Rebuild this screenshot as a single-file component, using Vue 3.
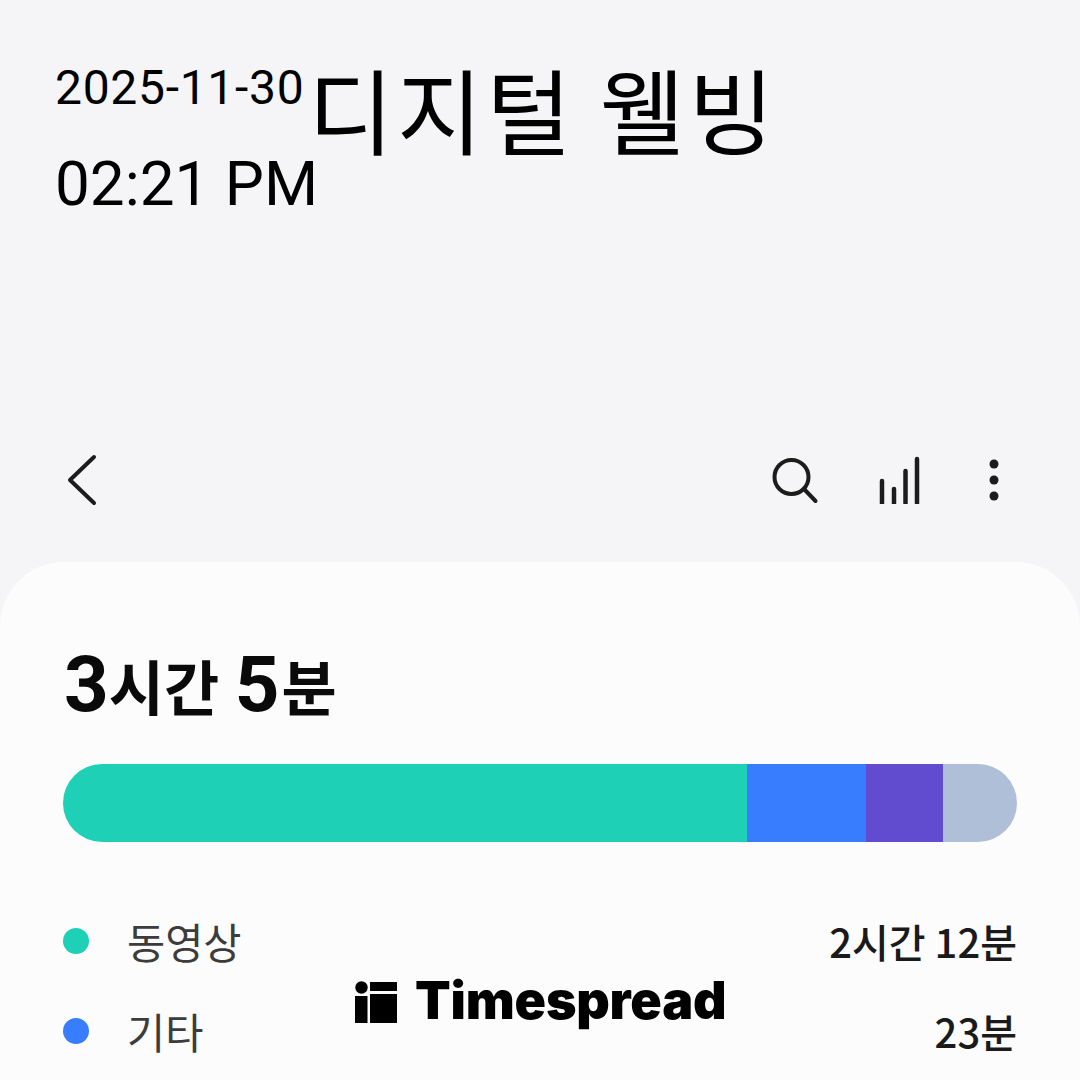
<template>
  <div class="page">
    <header class="head">
      <div class="stamp">
        <div class="date">2025-11-30</div>
        <div class="time">02:21 PM</div>
      </div>
      <h1 class="title">디지털 웰빙</h1>
    </header>

    <nav class="bar">
      <svg class="back" width="32" height="52" viewBox="0 0 32 52" fill="none">
        <path d="M28 3 L4 26 L28 49" stroke="#1c1c1c" stroke-width="4" stroke-linecap="round" stroke-linejoin="round" />
      </svg>
      <div class="tools">
        <svg width="48" height="48" viewBox="0 0 48 48" fill="none">
          <circle cx="20.500" cy="21" r="17" stroke="#1c1c1c" stroke-width="4" />
          <path d="M33 33 L44.500 45" stroke="#1c1c1c" stroke-width="4" stroke-linecap="round" />
        </svg>
        <svg width="44" height="48" viewBox="0 0 44 48" fill="none">
          <path d="M4 47 V25 M16 47 V33 M27.500 47 V15 M39 47 V3" stroke="#1c1c1c" stroke-width="4.500" stroke-linecap="round" />
        </svg>
        <svg width="26" height="42" viewBox="0 0 26 42">
          <circle cx="13" cy="5" r="4.500" fill="#1c1c1c" />
          <circle cx="13" cy="21" r="4.500" fill="#1c1c1c" />
          <circle cx="13" cy="37" r="4.500" fill="#1c1c1c" />
        </svg>
      </div>
    </nav>

    <section class="card">
      <div class="total">
        <b>3</b><span>시간</span>&nbsp;<b class="five">5</b><span class="min">분</span>
      </div>
      <div class="stack">
        <i v-for="s in segments" :key="s.color" :style="{ width: s.width + 'px', background: s.color }"></i>
      </div>
      <ul class="legend">
        <li v-for="row in rows" :key="row.name">
          <i class="dot" :style="{ background: row.color }"></i>
          <span class="name">{{ row.name }}</span>
          <span class="value">{{ row.value }}</span>
        </li>
      </ul>
    </section>

    <div class="brand">
      <svg width="42" height="42" viewBox="0 0 42 42">
        <circle cx="6.500" cy="6.500" r="6.200" fill="#000" />
        <rect x="0" y="15" width="12.500" height="27" fill="#000" />
        <rect x="15" y="1" width="27" height="9" fill="#000" />
        <rect x="15" y="13" width="27" height="29" fill="#000" />
      </svg>
      <span class="word">Timespread</span>
    </div>
  </div>
</template>

<script setup>
const segments = [
  { color: '#1dd0b6', width: 684 },
  { color: '#397dff', width: 119 },
  { color: '#614bce', width: 77 },
  { color: '#b0bfd8', width: 74 }
]
const rows = [
  { name: '동영상', value: '2시간 12분', color: '#1dd0b6' },
  { name: '기타', value: '23분', color: '#397dff' }
]
</script>

<style>
html, body { margin: 0; background: #f5f5f7; }
</style>

<style scoped>
.page {
  position: relative;
  width: 1080px;
  height: 1080px;
  overflow: hidden;
  background: #f5f5f7;
  font-family: Roboto, "Noto Sans CJK KR", sans-serif;
  color: #000;
}
.head { display: flex; align-items: flex-start; height: 430px; padding: 58px 0 0 55px; box-sizing: border-box; }
.stamp { width: 253px; flex: none; }
.date { font-size: 48px; line-height: 60px; letter-spacing: 0.700px; white-space: nowrap; }
.time { font-size: 62px; line-height: 72px; margin-top: 30px; white-space: nowrap; }
.title { margin: 0; font-size: 93px; line-height: 100px; font-weight: 400; letter-spacing: 3.500px; white-space: nowrap; font-family: "Noto Sans CJK KR", sans-serif; }
.bar { display: flex; justify-content: space-between; align-items: center; height: 132px; padding: 0 73px 32px 66px; box-sizing: border-box; }
.tools { display: flex; align-items: center; gap: 59px; }
.card { height: 520px; padding: 73px 63px 0 64px; box-sizing: border-box; background: #fcfcfc; border-radius: 64px 64px 0 0; }
.total { height: 95px; font-size: 60px; line-height: 100px; font-weight: 700; color: #0a0a0a; font-family: "Noto Sans CJK KR", sans-serif; white-space: nowrap; }
.total b { font-size: 78px; font-weight: 700; font-family: Roboto, sans-serif; }
.total .five { margin-left: 2px; }
.total .min { margin-left: 2px; }
.stack { display: flex; height: 78px; margin-top: 34px; margin-left: -1px; border-radius: 39px; overflow: hidden; }
.stack i { display: block; flex: none; }
.legend { list-style: none; margin: 54px 0 0 -1px; padding: 0; }
.legend li { display: flex; align-items: center; height: 90px; }
.dot { width: 26px; height: 26px; border-radius: 50%; flex: none; }
.name { margin-left: 38px; font-size: 41.500px; color: #3c3c3c; font-family: "Noto Sans CJK KR", sans-serif; }
.value { margin-left: auto; font-size: 40px; font-weight: 500; color: #1a1a1a; font-family: "Noto Sans CJK KR", sans-serif; }
.brand { position: absolute; left: 355px; top: 981px; display: flex; align-items: center; gap: 18px; height: 42px; font-family: Inter, sans-serif; font-weight: 900; font-size: 52px; letter-spacing: -0.200px; color: #000; }
.word { margin-bottom: 4px; }
</style>
